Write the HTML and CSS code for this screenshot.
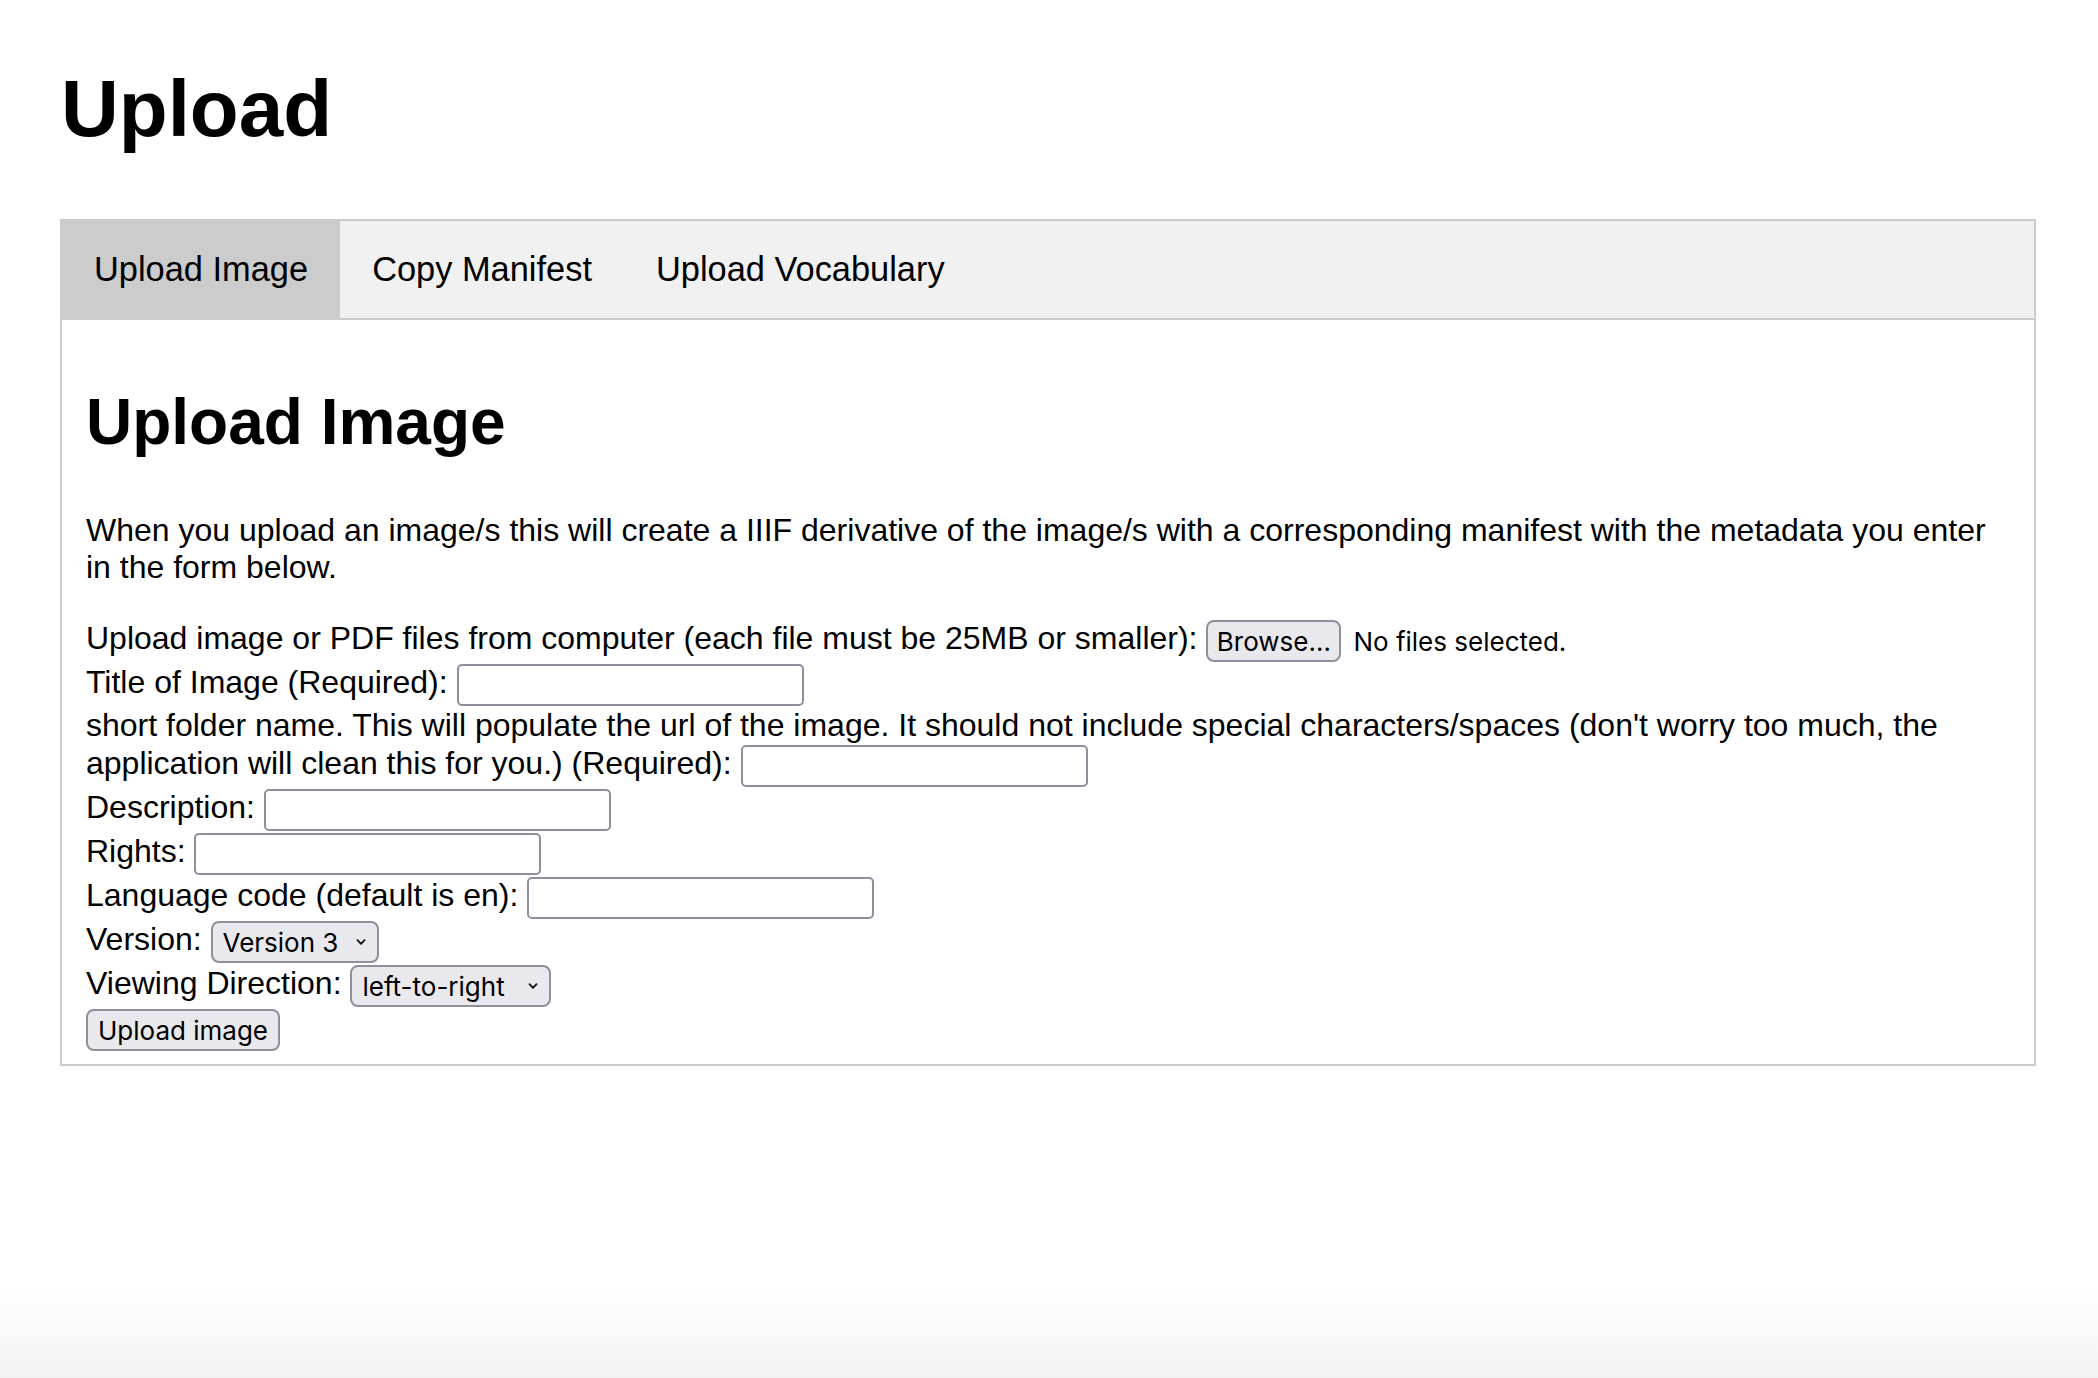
FILE: index.html
```html
<!DOCTYPE html>
<html lang="en">
<head>
<meta charset="utf-8">
<title>Upload</title>
<link rel="stylesheet" href="styles.css">
</head>
<body>
<div class="page">
  <h1 class="title">Upload</h1>
  <div class="tabs">
    <button class="tab active">Upload Image</button>
    <button class="tab">Copy Manifest</button>
    <button class="tab">Upload Vocabulary</button>
  </div>
  <div class="tabcontent">
    <h2 class="subtitle">Upload Image</h2>
    <p class="intro">When you upload an image/s this will create a IIIF derivative of the image/s with a corresponding manifest with the metadata you enter in the form below.</p>
    <form class="form">
      <div class="row">Upload image or PDF files from computer (each file must be 25MB or smaller): <button type="button" class="ctrl btn browse">Browse…</button><span class="nofile">No files selected.</span></div>
      <div class="row">Title of Image (Required): <input class="ctrl text" type="text"></div>
      <div class="row">short folder name. This will populate the url of the image. It should not include special characters/spaces (don't worry too much, the application will clean this for you.) (Required): <input class="ctrl text" type="text"></div>
      <div class="row">Description: <input class="ctrl text" type="text"></div>
      <div class="row">Rights: <input class="ctrl text" type="text"></div>
      <div class="row">Language code (default is en): <input class="ctrl text" type="text"></div>
      <div class="row">Version: <span class="selwrap"><select class="ctrl sel sel-version"><option>Version 3</option><option>Version 2</option></select><svg class="chev" width="10" height="6" viewBox="0 0 10 6"><polyline points="1.5,1.2 5,4.8 8.5,1.2" fill="none" stroke="#111" stroke-width="1.8" stroke-linecap="round" stroke-linejoin="round"/></svg></span></div>
      <div class="row">Viewing Direction: <span class="selwrap"><select class="ctrl sel sel-dir"><option>left-to-right</option><option>right-to-left</option></select><svg class="chev" width="10" height="6" viewBox="0 0 10 6"><polyline points="1.5,1.2 5,4.8 8.5,1.2" fill="none" stroke="#111" stroke-width="1.8" stroke-linecap="round" stroke-linejoin="round"/></svg></span></div>
      <div class="row"><button type="button" class="ctrl btn submit">Upload image</button></div>
    </form>
  </div>
</div>
<div class="bottomshade"></div>
</body>
</html>
```

FILE: styles.css
```css
html, body {
  margin: 0;
  padding: 0;
  background: #fff;
}
body {
  font-family: "Liberation Sans", Arial, Helvetica, sans-serif;
  font-size: 32px;
  color: #000;
}
.page {
  padding: 0 62px 0 60px;
}
.title {
  font-size: 80px;
  line-height: 92px;
  font-weight: bold;
  margin: 63px 0 64px 1px;
}
.tabs {
  display: flex;
  border: 2px solid #ccc;
  background: #f1f1f1;
}
.tab {
  background: inherit;
  border: none;
  outline: none;
  margin: 0;
  padding: 28px 32px;
  font-family: "Liberation Sans", Arial, Helvetica, sans-serif;
  font-size: 34.4px;
  line-height: 41px;
  color: #000;
}
.tab.active {
  background: #ccc;
}
.tabcontent {
  border: 2px solid #ccc;
  border-top: none;
  padding: 12px 24px;
}
.subtitle {
  font-size: 64px;
  line-height: 74px;
  font-weight: bold;
  margin: 53px 0 0 0;
}
.intro {
  line-height: 37px;
  margin: 53px 0 33px 0;
}
.form {
  margin: 0;
}
.row {
  line-height: 37px;
}
.ctrl {
  box-sizing: border-box;
  height: 42px;
  margin: 1px 0;
  vertical-align: middle;
  font-family: Inter, "Noto Sans", sans-serif;
  font-size: 26px;
  color: #000;
}
.text {
  width: 347px;
  border: 2px solid #8f8f9d;
  border-radius: 5px;
  background: #fff;
  padding: 0 6px;
}
.btn {
  background: #e9e9ed;
  border: 2px solid #8f8f9d;
  border-radius: 8px;
  padding: 0 11px;
}
.browse {
  width: 135px;
  padding: 0;
}
.nofile {
  font-family: Inter, "Noto Sans", sans-serif;
  font-size: 26px;
  margin-left: 12px;
  vertical-align: middle;
}
.submit {
  width: 194px;
  padding: 0;
}
.selwrap {
  position: relative;
  display: inline-block;
  vertical-align: middle;
  line-height: 0;
}
.sel {
  appearance: none;
  -webkit-appearance: none;
  background: #e9e9ed;
  border: 2px solid #8f8f9d;
  border-radius: 8px;
  padding: 0 0 0 10px;
  margin: 1px 0;
}
.sel-version {
  width: 168px;
}
.sel-dir {
  width: 201px;
}
.chev {
  position: absolute;
  right: 13px;
  top: 19px;
  pointer-events: none;
}
.bottomshade {
  position: fixed;
  left: 0;
  right: 0;
  bottom: 0;
  height: 90px;
  background: linear-gradient(to bottom, rgba(243, 243, 243, 0), #f3f3f3);
  pointer-events: none;
}
```
